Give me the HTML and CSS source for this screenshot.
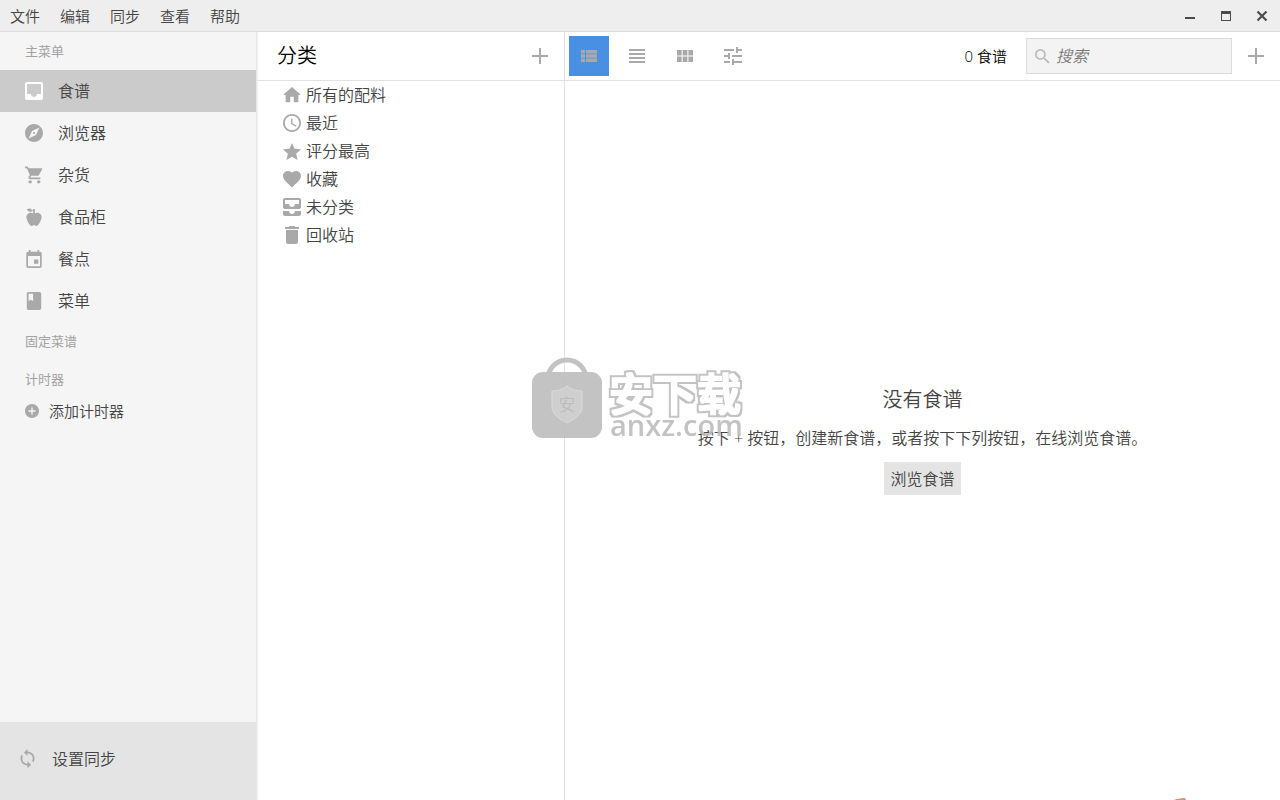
FILE: index.html
```html
<!DOCTYPE html>
<html lang="zh-CN">
<head>
<meta charset="utf-8">
<title>食谱</title>
<link rel="stylesheet" href="styles.css">
</head>
<body>
<div class="app">
  <header class="titlebar">
    <nav class="menubar">
      <button class="menu">文件</button>
      <button class="menu">编辑</button>
      <button class="menu">同步</button>
      <button class="menu">查看</button>
      <button class="menu">帮助</button>
    </nav>
    <div class="window-controls">
      <button class="window-button" aria-label="最小化"><svg width="12" height="12" viewBox="0 0 12 12"><path d="M1 7h10v2H1z"/></svg></button>
      <button class="window-button" aria-label="最大化"><svg width="12" height="12" viewBox="0 0 12 12"><path fill-rule="evenodd" d="M1 1h10v10H1zM2 4v6h8V4z"/></svg></button>
      <button class="window-button" aria-label="关闭"><svg width="12" height="12" viewBox="0 0 12 12"><path d="M1.500 1.500l9 9M10.500 1.500l-9 9" stroke="#4c4c4c" stroke-width="2.200"/></svg></button>
    </div>
  </header>

  <div class="workspace">
    <aside class="sidebar">
      <h2 class="section-label">主菜单</h2>
      <nav class="main-nav">
        <a class="nav-item active" href="#recipes"><svg class="icon" viewBox="3 3 18 18"><path d="M19 3H5c-1.100 0-2 .9-2 2v14c0 1.100.9 2 2 2h14c1.100 0 2-.9 2-2V5c0-1.100-.9-2-2-2zm0 12h-4c0 1.660-1.350 3-3 3s-3-1.340-3-3H5V5h14z"/></svg>食谱</a>
        <a class="nav-item" href="#browser"><svg class="icon" viewBox="2 2 20 20"><path d="M12 10.900c-.61 0-1.100.49-1.100 1.100s.49 1.100 1.100 1.100 1.100-.49 1.100-1.100-.49-1.100-1.100-1.100zM12 2C6.480 2 2 6.480 2 12s4.480 10 10 10 10-4.480 10-10S17.520 2 12 2zm2.190 12.190L6 18l3.810-8.190L18 6z"/></svg>浏览器</a>
        <a class="nav-item" href="#groceries"><svg class="icon" viewBox="1 2 21 20"><path d="M7 18c-1.100 0-1.990.9-1.990 2S5.900 22 7 22s2-.9 2-2-.9-2-2-2zM1 2v2h2l3.600 7.590-1.350 2.450c-.16.28-.25.61-.25.96 0 1.100.9 2 2 2h12v-2H7.420c-.14 0-.25-.11-.25-.25l.03-.12.9-1.630h7.450c.75 0 1.410-.41 1.750-1.030l3.580-6.490A1 1 0 0 0 20 4H5.210l-.94-2zm16 16c-1.100 0-1.990.9-1.990 2s.89 2 1.990 2 2-.9 2-2-.9-2-2-2z"/></svg>杂货</a>
        <a class="nav-item" href="#pantry"><svg class="icon" viewBox="2 2 20 20"><path d="M20 10C22 13 17 22 15 22s-2-1-3-1-1 1-3 1S2 13 4 10s5-3 7-2V5C5.380 8.070 4.110 3.780 4.110 3.780S6.770.19 11 5V3h2v5c2-1 5-1 7 2z"/></svg>食品柜</a>
        <a class="nav-item" href="#meals"><svg class="icon" viewBox="1.500 1 21 21"><path d="M17 12h-5v5h5zM16 1v2H8V1H6v2H5c-1.110 0-1.990.9-1.990 2L3 20c0 1.100.89 2 2 2h14c1.100 0 2-.9 2-2V5c0-1.100-.9-2-2-2h-1V1zm3 19H5V8h14z"/></svg>餐点</a>
        <a class="nav-item" href="#menus"><svg class="icon" viewBox="2 2 20 20"><path d="M18 2H6c-1.100 0-2 .9-2 2v16c0 1.100.9 2 2 2h12c1.100 0 2-.9 2-2V4c0-1.100-.9-2-2-2zM6 4h5v8l-2.500-1.500L6 12z"/></svg>菜单</a>
      </nav>
      <h2 class="section-label">固定菜谱</h2>
      <h2 class="section-label">计时器</h2>
      <button class="add-timer"><svg class="icon-small" viewBox="2 2 20 20"><path d="M12 2C6.480 2 2 6.480 2 12s4.480 10 10 10 10-4.480 10-10S17.520 2 12 2zm5 11h-4v4h-2v-4H7v-2h4V7h2v4h4z"/></svg>添加计时器</button>
      <button class="sync"><svg class="icon-sync" viewBox="0 0 24 24"><path d="M12 4V1L8 5l4 4V6c3.310 0 6 2.690 6 6 0 1.010-.25 1.970-.7 2.800l1.460 1.460A7.930 7.930 0 0 0 20 12c0-4.420-3.580-8-8-8zm0 14c-3.310 0-6-2.690-6-6 0-1.010.25-1.970.7-2.800L5.240 7.740A7.930 7.930 0 0 0 4 12c0 4.420 3.580 8 8 8v3l4-4-4-4z"/></svg>设置同步</button>
    </aside>

    <section class="categories">
      <header class="categories-header">
        <h1 class="categories-title">分类</h1>
        <button class="add-button" aria-label="添加分类"><svg class="icon-plus" viewBox="0 0 16 16"><path d="M7 0h2v7h7v2H9v7H7V9H0V7h7z"/></svg></button>
      </header>
      <ul class="category-list">
        <li><a class="category" href="#all"><svg class="icon" viewBox="2 2 20 20"><path d="M10 20v-6h4v6h5v-8h3L12 3 2 12h3v8z"/></svg>所有的配料</a></li>
        <li><a class="category" href="#recent"><svg class="icon" viewBox="2 2 20 20"><path d="M11.990 2C6.470 2 2 6.480 2 12s4.470 10 9.990 10C17.520 22 22 17.520 22 12S17.520 2 11.990 2zM12 20c-4.420 0-8-3.580-8-8s3.580-8 8-8 8 3.580 8 8-3.580 8-8 8zm.5-13H11v6l5.250 3.150.75-1.230-4.500-2.670z"/></svg>最近</a></li>
        <li><a class="category" href="#top"><svg class="icon" viewBox="2 1 20 20"><path d="M12 17.270L18.180 21l-1.640-7.030L22 9.240l-7.190-.61L12 2 9.190 8.630 2 9.240l5.460 4.730L5.820 21z"/></svg>评分最高</a></li>
        <li><a class="category" href="#favorites"><svg class="icon" viewBox="2 2 20 20"><path d="M12 21.350l-1.450-1.320C5.400 15.360 2 12.280 2 8.500 2 5.420 4.420 3 7.500 3c1.740 0 3.410.81 4.500 2.090C13.090 3.810 14.760 3 16.500 3 19.580 3 22 5.420 22 8.500c0 3.780-3.400 6.860-8.550 11.540z"/></svg>收藏</a></li>
        <li><a class="category" href="#uncategorized"><svg class="icon" viewBox="3 3 18 18"><path d="M19 3H5c-1.100 0-2 .9-2 2v7c0 1.100.9 2 2 2h14c1.100 0 2-.9 2-2V5c0-1.100-.9-2-2-2zm0 6h-4c0 1.620-1.380 3-3 3s-3-1.380-3-3H5V5h14zm-4 7h6v3c0 1.100-.9 2-2 2H5c-1.100 0-2-.9-2-2v-3h6c0 1.660 1.340 3 3 3s3-1.340 3-3z"/></svg>未分类</a></li>
        <li><a class="category" href="#trash"><svg class="icon" viewBox="3 3 18 18"><path d="M6 19c0 1.100.9 2 2 2h8c1.100 0 2-.9 2-2V7H6zM19 4h-3.500l-1-1h-5l-1 1H5v2h14z"/></svg>回收站</a></li>
      </ul>
    </section>

    <main class="recipes">
      <header class="toolbar">
        <div class="view-modes">
          <button class="mode selected" aria-label="列表视图"><svg viewBox="0 0 16 14"><path d="M0 1h4v3.500H0zM5 1h11v3.500H5zM0 5.300h4v3.400H0zM5 5.300h11v3.400H5zM0 9.500h4V13H0zM5 9.500h11V13H5z"/></svg></button>
          <button class="mode" aria-label="紧凑视图"><svg viewBox="0 0 16 14"><path d="M0 0h16v2H0zM0 4h16v2H0zM0 8h16v2H0zM0 12h16v2H0z"/></svg></button>
          <button class="mode" aria-label="网格视图"><svg viewBox="0 0 16 14"><path d="M0 1h4.700v5.500H0zM5.700 1h4.700v5.500H5.700zM11.400 1H16v5.500h-4.600zM0 7.500h4.700V13H0zM5.700 7.500h4.700V13H5.700zM11.400 7.500H16V13h-4.600z"/></svg></button>
          <button class="mode" aria-label="筛选"><svg class="icon" viewBox="3 3 18 18"><path d="M3 17v2h6v-2zM3 5v2h10V5zm10 16v-2h8v-2h-8v-2h-2v6zM7 9v2H3v2h4v2h2V9zm14 4v-2H11v2zm-6-4h2V7h4V5h-4V3h-2z"/></svg></button>
        </div>
        <span class="count">0 食谱</span>
        <label class="search">
          <svg class="icon-search" viewBox="3 3 18 18"><path d="M15.500 14h-.79l-.28-.27A6.470 6.470 0 0 0 16 9.500 6.500 6.500 0 1 0 9.500 16c1.610 0 3.090-.59 4.230-1.570l.27.28v.79l5 4.990L20.490 19zm-6 0C7.010 14 5 11.990 5 9.500S7.010 5 9.500 5 14 7.010 14 9.500 11.990 14 9.500 14z"/></svg>
          <input class="search-input" type="text" placeholder="搜索" aria-label="搜索">
        </label>
        <button class="add-button" aria-label="添加食谱"><svg class="icon-plus" viewBox="0 0 16 16"><path d="M7 0h2v7h7v2H9v7H7V9H0V7h7z"/></svg></button>
      </header>
      <div class="empty">
        <h2 class="empty-title">没有食谱</h2>
        <p class="empty-text">按下 + 按钮，创建新食谱，或者按下下列按钮，在线浏览食谱。</p>
        <button class="browse">浏览食谱</button>
      </div>
    </main>
  </div>

  <svg class="watermark" viewBox="0 0 216 84">
    <defs>
      <filter id="outline" x="-5%" y="-10%" width="110%" height="120%">
        <feMorphology in="SourceAlpha" operator="dilate" radius="3" result="wide"/>
        <feMorphology in="SourceAlpha" operator="dilate" radius="1" result="inner"/>
        <feFlood flood-color="#bdbdbd"/>
        <feComposite in2="wide" operator="in" result="edge"/>
        <feFlood flood-color="#fff"/>
        <feComposite in2="inner" operator="in" result="face"/>
        <feMerge><feMergeNode in="edge"/><feMergeNode in="face"/></feMerge>
      </filter>
    </defs>
    <path d="M17 22a19 19 0 0 1 38 0" fill="none" stroke="#bdbdbd" stroke-width="5"/>
    <rect x="1" y="15" width="70" height="66" rx="11" fill="#bdbdbd"/>
    <path d="M36 29c5 4 10 5 15 5v16c0 7-7 12-15 16-8-4-15-9-15-16V34c5 0 10-1 15-5z" fill="#cacaca" stroke="#d8d8d8"/>
    <text class="mark-shield" x="36" y="54" text-anchor="middle">安</text>
    <text class="mark-name" x="78" y="54" filter="url(#outline)">安下载</text>
    <text class="mark-site" x="79" y="79">anxz.com</text>
  </svg>
  <svg class="corner-mark" viewBox="0 0 12 2"><path d="M0 2c3-1 6-2 11-2l1 2z"/></svg>
</div>
</body>
</html>
```
FILE: styles.css
```css
* {
  box-sizing: border-box;
}

body {
  margin: 0;
  color: #444;
  font-family: "Open Sans", "Noto Sans CJK SC", sans-serif;
  font-size: 16px;
  font-weight: 350;
  line-height: 24px;
}

h1, h2, p, ul {
  margin: 0;
  padding: 0;
  font-weight: inherit;
}

ul {
  list-style: none;
}

a {
  color: inherit;
  text-decoration: none;
}

button {
  padding: 0;
  border: 0;
  background: none;
  color: inherit;
  font: inherit;
}

svg {
  display: block;
  flex: none;
  fill: #a9a9a9;
}

.app {
  position: relative;
  display: flex;
  flex-direction: column;
  height: 100vh;
  overflow: hidden;
  background: #fff;
}

.titlebar {
  display: flex;
  justify-content: space-between;
  height: 32px;
  background: #eee;
  border-bottom: 1px solid #dcdcdc;
}

.menubar {
  display: flex;
}

.menu {
  padding: 0 10px;
  font-size: 15px;
}

.window-controls {
  display: flex;
}

.window-button {
  display: grid;
  place-items: center;
  width: 36px;
}

.window-button svg {
  fill: #4c4c4c;
}

.workspace {
  display: flex;
  flex: 1;
  min-height: 0;
}

.sidebar {
  display: flex;
  flex-direction: column;
  width: 257px;
  background: #f5f5f5;
  border-right: 1px solid #e6e6e6;
  box-shadow: 0 0 2px #ddd;
}

.section-label {
  padding-left: 25px;
  color: #a2a2a2;
  font-size: 13px;
  font-weight: 400;
  line-height: 38px;
}

.nav-item {
  display: flex;
  align-items: center;
  gap: 15px;
  height: 42px;
  padding-left: 25px;
}

.nav-item.active {
  background: #cbcbcb;
}

.nav-item.active svg {
  fill: #fff;
}

.icon {
  width: 18px;
  height: 18px;
}

.icon-small {
  width: 14px;
  height: 14px;
}

.icon-sync {
  width: 21px;
  height: 21px;
}

.icon-plus {
  width: 16px;
  height: 16px;
}

.icon-search {
  width: 15px;
  height: 15px;
  fill: #bbb;
}

.add-timer {
  display: flex;
  align-items: center;
  gap: 10px;
  height: 26px;
  padding-left: 25px;
  font-size: 15px;
}

.sync {
  display: flex;
  align-items: center;
  gap: 14px;
  height: 78px;
  margin-top: auto;
  padding: 0 0 5px 17px;
  background: #e4e4e4;
}

.categories {
  width: 308px;
  border-right: 1px solid #e2e2e2;
}

.categories-header {
  display: flex;
  align-items: center;
  justify-content: space-between;
  height: 49px;
  padding-left: 20px;
  border-bottom: 1px solid #e2e2e2;
}

.categories-title {
  color: #000;
  font-size: 20px;
}

.add-button {
  display: grid;
  place-items: center;
  width: 48px;
  height: 48px;
}

.category {
  display: flex;
  align-items: center;
  gap: 5px;
  height: 28px;
  padding-left: 26px;
}

.recipes {
  display: flex;
  flex: 1;
  flex-direction: column;
  min-width: 0;
}

.toolbar {
  display: flex;
  align-items: center;
  height: 49px;
  padding-left: 4px;
  border-bottom: 1px solid #e2e2e2;
}

.view-modes {
  display: flex;
  gap: 8px;
}

.mode {
  display: grid;
  place-items: center;
  width: 40px;
  height: 40px;
}

.mode svg:not(.icon) {
  width: 16px;
  height: 14px;
}

.mode.selected {
  background: #4a90e2;
}

.count {
  margin-left: auto;
  color: #000;
  font-size: 15px;
}

.search {
  display: flex;
  align-items: center;
  gap: 6px;
  width: 206px;
  height: 36px;
  margin-left: 19px;
  padding-left: 8px;
  background: #f3f3f3;
  border: 1px solid #dcdcdc;
}

.search-input {
  flex: 1;
  min-width: 0;
  padding: 0;
  border: 0;
  outline: 0;
  background: none;
  color: #444;
  font: inherit;
  font-style: italic;
}

.search-input::placeholder {
  color: #777;
}

.empty {
  display: flex;
  flex: 1;
  flex-direction: column;
  align-items: center;
  justify-content: center;
  gap: 12px;
}

.empty-title {
  font-size: 20px;
  line-height: 28px;
}

.browse {
  height: 33px;
  padding: 0 6px;
  background: #e4e4e4;
}

/* Site mark floating over the middle of the window */
.watermark {
  position: absolute;
  top: 357px;
  left: 531px;
  width: 216px;
  height: 84px;
  overflow: visible;
  opacity: 0.9;
  pointer-events: none;
}

.mark-shield {
  fill: #b5b5b5;
  font-size: 17px;
}

.mark-name {
  font-size: 44px;
  font-weight: 500;
}

.mark-site {
  fill: #bdbdbd;
  font-size: 29px;
  font-weight: 600;
}

.corner-mark {
  position: absolute;
  right: 94px;
  bottom: 0;
  width: 12px;
  height: 2px;
  fill: #e08a70;
}
```
